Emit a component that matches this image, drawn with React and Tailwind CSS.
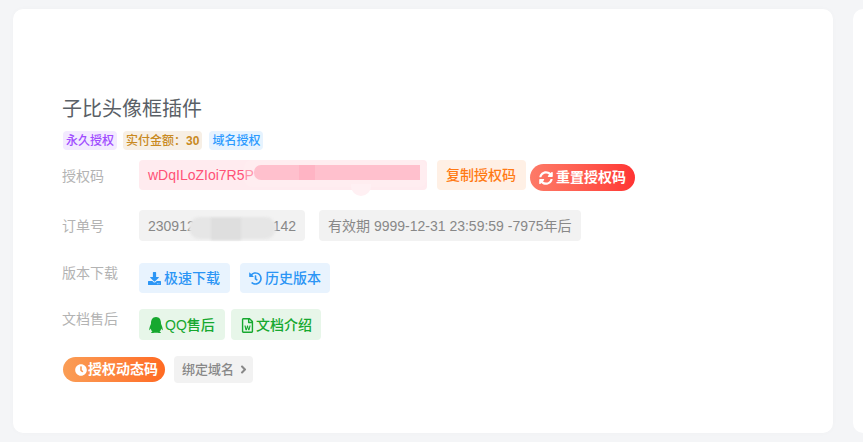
import React from "react";
import { FaDownload, FaHistory, FaQq, FaRegFileWord, FaSyncAlt, FaClock, FaAngleRight } from "react-icons/fa";

const font = { fontFamily: '"Liberation Sans", "Noto Sans CJK SC", sans-serif' };

function Tag({ className, children }) {
  return <span className={`h-[19px] px-[3px] rounded-[4px] text-[12px] leading-[20px] font-medium ${className}`}>{children}</span>;
}

function Btn({ className = "", children }) {
  return <div className={`flex items-center rounded-[4px] pl-[9px] pt-[1px] text-[14px] font-medium ${className}`}>{children}</div>;
}

function Label({ className = "", children }) {
  return <div className={`w-[77px] -ml-[1px] shrink-0 text-[14px] text-[#b3b3b3] ${className}`}>{children}</div>;
}

export default function App() {
  return (
    <div style={font} className="w-[863px] h-[442px] overflow-hidden bg-[#f4f5f7] flex gap-[20px] pl-[13px] pt-[9px]">
      <div className="w-[820px] h-[424px] shrink-0 bg-white rounded-[10px] pl-[50px] pt-[87px] shadow-[0_0_6px_rgba(0,0,0,0.02)]">
        <h1 className="-ml-[1px] text-[20px] leading-[26px] font-normal text-[#5a5f66]">子比头像框插件</h1>
        <div className="flex mt-[9px]">
          <Tag className="bg-[#f3eaff] text-[#a04dff]">永久授权</Tag>
          <Tag className="ml-[6px] bg-[#f7efe5] text-[#c98a1f]">实付金额：<span className="font-bold">30</span></Tag>
          <Tag className="ml-[7px] bg-[#e6f3ff] text-[#2d9bff]">域名授权</Tag>
        </div>

        <div className="flex mt-[10px] h-[31px]">
          <Label className="leading-[33px]">授权码</Label>
          <div className="relative w-[288px] h-[30px] rounded-[4px] bg-[#ffebef] text-[#ff5277] text-[14px] leading-[31px] pl-[9px]">
            wDqILoZIoi7R5P
            <div className="absolute left-[105px] top-0 w-[183px] h-[27px] rounded-[8px] bg-[#fff0f3]/40" />
            <div className="absolute left-[212px] top-[24px] w-[20px] h-[12px] rounded-b-[10px] bg-[#fff0f3]" />
            <div className="absolute left-[115px] top-[5px] w-[166px] h-[15px] rounded-l-[7px] bg-[#ffc0cd]" />
            <div className="absolute left-[160px] top-[5px] w-[16px] h-[15px] bg-[#ffb4c4]" />
          </div>
          <Btn className="ml-[10px] h-[30px] w-[89px] bg-[#fff0e5] text-[#ff7a14]">复制授权码</Btn>
          <div className="ml-[4px] mt-[4px] h-[27px] w-[105px] pl-[9px] rounded-full bg-gradient-to-r from-[#fd7a68] to-[#ff3333] text-white text-[14px] font-bold flex items-center gap-[3px]">
            <FaSyncAlt className="text-[14px]" />
            重置授权码
          </div>
        </div>

        <div className="flex mt-[19px] h-[31px]">
          <Label className="leading-[33px]">订单号</Label>
          <div className="relative w-[166px] rounded-[4px] bg-[#f2f2f2] text-[#888] text-[14px] leading-[32px] pl-[9px]">
            230912
            <span className="absolute right-[9px] top-0">142</span>
            <div className="absolute left-[50px] top-[7px] w-[87px] h-[22px] rounded-[11px] bg-[#e6e6e6] blur-[1px]" />
            <div className="absolute left-[72px] top-[8px] w-[30px] h-[22px] bg-[#dedede] blur-[1px]" />
          </div>
          <div className="ml-[14px] rounded-[4px] bg-[#f2f2f2] text-[#888] text-[14px] leading-[32px] px-[9px]">
            有效期 9999-12-31 23:59:59 -7975年后
          </div>
        </div>

        <div className="flex mt-[22px] h-[30px]">
          <Label className="leading-[20px]">版本下载</Label>
          <Btn className="w-[91px] bg-[#e8f3fe] text-[#2b95f5] gap-[3px]"><FaDownload className="text-[13px]" />极速下载</Btn>
          <Btn className="ml-[10px] w-[90px] bg-[#e8f3fe] text-[#2b95f5] gap-[3px]"><FaHistory className="text-[13px]" />历史版本</Btn>
        </div>

        <div className="flex mt-[16px] h-[31px]">
          <Label className="leading-[20px]">文档售后</Label>
          <Btn className="w-[86px] bg-[#e7f6e9] text-[#16a82f] gap-[1px]"><FaQq className="text-[16px]" />QQ售后</Btn>
          <Btn className="ml-[6px] w-[90px] bg-[#e7f6e9] text-[#16a82f] gap-[1px]"><FaRegFileWord className="text-[15px]" />文档介绍</Btn>
        </div>

        <div className="flex items-center mt-[16px] h-[27px]">
          <div className="w-[102px] h-[25px] rounded-full bg-gradient-to-r from-[#fa9d55] to-[#ff6a22] text-white text-[14px] font-bold flex items-center pl-[12px] gap-[1px]">
            <FaClock className="text-[12px]" />
            授权动态码
          </div>
          <div className="ml-[9px] w-[79px] h-[27px] rounded-[4px] bg-[#f2f2f2] text-[#888] text-[13px] font-medium flex items-center pl-[8px] gap-[3px]">
            绑定域名
            <FaAngleRight className="text-[13px]" />
          </div>
        </div>
      </div>
      <div className="w-[40px] h-[424px] shrink-0 bg-white rounded-[10px]" />
    </div>
  );
}
